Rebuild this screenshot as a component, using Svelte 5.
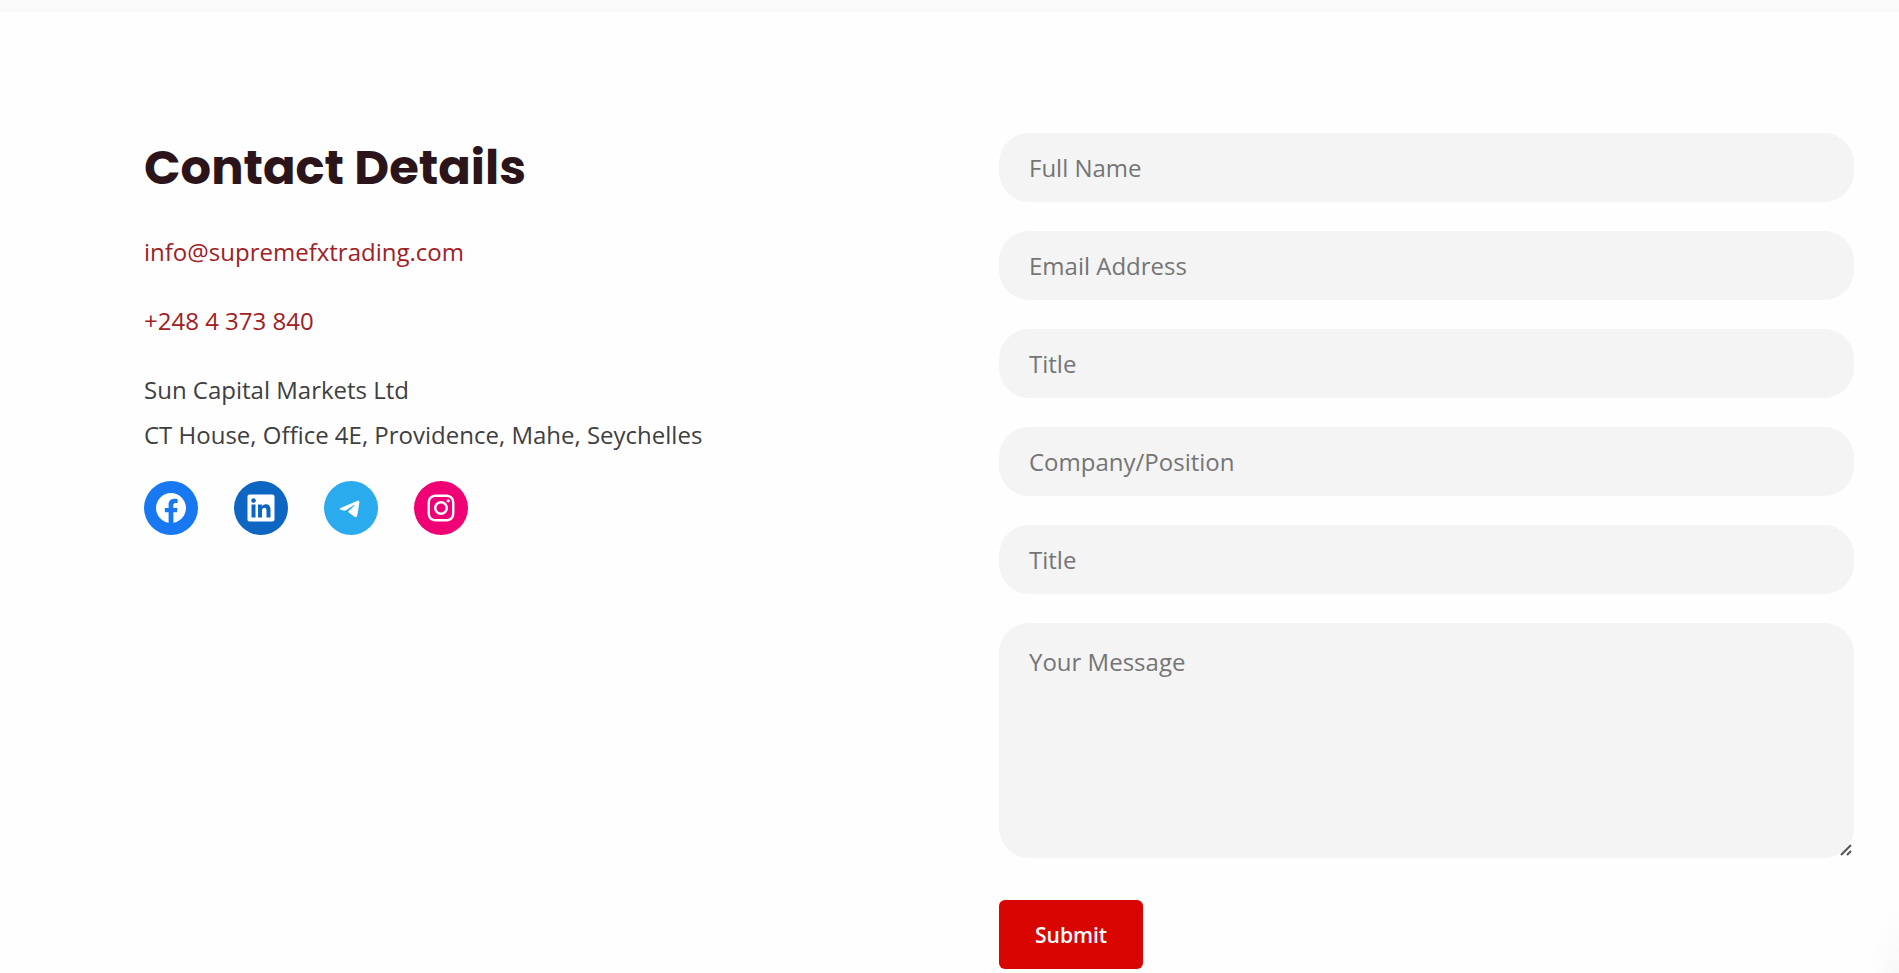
<script>
  const fields = [
    { name: 'full-name', label: 'Full Name', type: 'text' },
    { name: 'email', label: 'Email Address', type: 'email' },
    { name: 'title', label: 'Title', type: 'text' },
    { name: 'company', label: 'Company/Position', type: 'text' },
    { name: 'subject', label: 'Title', type: 'text' }
  ];

  const socials = [
    {
      name: 'Facebook',
      key: 'facebook',
      box: '0 0 24 24',
      path: 'M12 2C6.5 2 2 6.5 2 12c0 5 3.7 9.1 8.4 9.9v-7H7.9V12h2.5V9.8c0-2.5 1.5-3.9 3.8-3.9 1.1 0 2.2.2 2.2.2v2.5h-1.3c-1.2 0-1.6.8-1.6 1.6V12h2.8l-.4 2.9h-2.3v7C18.3 21.1 22 17 22 12c0-5.5-4.5-10-10-10z'
    },
    {
      name: 'LinkedIn',
      key: 'linkedin',
      box: '0 0 24 24',
      path: 'M19.7,3H4.3C3.582,3,3,3.582,3,4.3v15.4C3,20.418,3.582,21,4.3,21h15.4c0.718,0,1.3-0.582,1.3-1.3V4.3C21,3.582,20.418,3,19.7,3z M8.339,18.338H5.667v-8.59h2.672V18.338z M7.004,8.574c-0.857,0-1.549-0.694-1.549-1.548c0-0.855,0.691-1.548,1.549-1.548c0.854,0,1.547,0.694,1.547,1.548C8.551,7.881,7.858,8.574,7.004,8.574z M18.339,18.338h-2.669v-4.177c0-0.996-0.017-2.278-1.387-2.278c-1.389,0-1.601,1.086-1.601,2.206v4.249h-2.667v-8.59h2.559v1.174h0.037c0.356-0.675,1.227-1.387,2.526-1.387c2.703,0,3.203,1.779,3.203,4.092V18.338z'
    },
    {
      name: 'Telegram',
      key: 'telegram',
      box: '0 0 128 128',
      path: 'M28.97,63.324 C47.627,55.196 60.068,49.837 66.293,47.248 C84.067,39.855 87.76,38.571 90.167,38.528 C90.697,38.519 91.88,38.65 92.647,39.273 C93.295,39.798 93.473,40.508 93.558,41.006 C93.643,41.504 93.749,42.639 93.665,43.525 C92.702,53.645 88.534,78.203 86.414,89.538 C85.517,94.334 83.751,95.942 82.04,96.099 C78.324,96.441 75.502,93.643 71.902,91.284 C66.269,87.591 63.087,85.293 57.619,81.69 C51.3,77.526 55.397,75.237 58.998,71.497 C59.94,70.518 76.316,55.623 76.632,54.272 C76.672,54.103 76.709,53.473 76.335,53.141 C75.96,52.808 75.408,52.922 75.01,53.012 C74.445,53.14 65.446,59.088 48.014,70.855 C45.46,72.609 43.146,73.464 41.073,73.419 C38.788,73.37 34.393,72.127 31.125,71.065 C27.117,69.762 23.931,69.073 24.209,66.86 C24.353,65.708 25.94,64.529 28.97,63.324 Z'
    },
    {
      name: 'Instagram',
      key: 'instagram',
      box: '0 0 24 24',
      path: 'M12,4.622c2.403,0,2.688,0.009,3.637,0.052c0.877,0.04,1.354,0.187,1.671,0.31c0.42,0.163,0.72,0.358,1.035,0.673c0.315,0.315,0.51,0.615,0.673,1.035c0.123,0.317,0.27,0.794,0.31,1.671c0.043,0.949,0.052,1.234,0.052,3.637s-0.009,2.688-0.052,3.637c-0.04,0.877-0.187,1.354-0.31,1.671c-0.163,0.42-0.358,0.72-0.673,1.035c-0.315,0.315-0.615,0.51-1.035,0.673c-0.317,0.123-0.794,0.27-1.671,0.31c-0.949,0.043-1.233,0.052-3.637,0.052s-2.688-0.009-3.637-0.052c-0.877-0.04-1.354-0.187-1.671-0.31c-0.42-0.163-0.72-0.358-1.035-0.673c-0.315-0.315-0.51-0.615-0.673-1.035c-0.123-0.317-0.27-0.794-0.31-1.671C4.631,14.688,4.622,14.403,4.622,12s0.009-2.688,0.052-3.637c0.04-0.877,0.187-1.354,0.31-1.671c0.163-0.42,0.358-0.72,0.673-1.035c0.315-0.315,0.615-0.51,1.035-0.673c0.317-0.123,0.794-0.27,1.671-0.31C9.312,4.631,9.597,4.622,12,4.622 M12,3C9.556,3,9.249,3.01,8.289,3.054C7.331,3.098,6.677,3.25,6.105,3.472C5.513,3.702,5.011,4.01,4.511,4.511c-0.5,0.5-0.808,1.002-1.038,1.594C3.25,6.677,3.098,7.331,3.054,8.289C3.01,9.249,3,9.556,3,12c0,2.444,0.01,2.751,0.054,3.711c0.044,0.958,0.196,1.612,0.418,2.185c0.23,0.592,0.538,1.094,1.038,1.594c0.5,0.5,1.002,0.808,1.594,1.038c0.572,0.222,1.227,0.375,2.185,0.418C9.249,20.99,9.556,21,12,21s2.751-0.01,3.711-0.054c0.958-0.044,1.612-0.196,2.185-0.418c0.592-0.23,1.094-0.538,1.594-1.038c0.5-0.5,0.808-1.002,1.038-1.594c0.222-0.572,0.375-1.227,0.418-2.185C20.99,14.751,21,14.444,21,12s-0.01-2.751-0.054-3.711c-0.044-0.958-0.196-1.612-0.418-2.185c-0.23-0.592-0.538-1.094-1.038-1.594c-0.5-0.5-1.002-0.808-1.594-1.038c-0.572-0.222-1.227-0.375-2.185-0.418C14.751,3.01,14.444,3,12,3L12,3z M12,7.378c-2.552,0-4.622,2.069-4.622,4.622S9.448,16.622,12,16.622s4.622-2.069,4.622-4.622S14.552,7.378,12,7.378z M12,15c-1.657,0-3-1.343-3-3s1.343-3,3-3s3,1.343,3,3S13.657,15,12,15z M16.804,6.116c-0.596,0-1.08,0.484-1.08,1.08s0.484,1.08,1.08,1.08c0.596,0,1.08-0.484,1.08-1.08S17.4,6.116,16.804,6.116z'
    }
  ];
</script>

<div class="band"></div>
<main class="contact">
  <section class="details">
    <h2>Contact Details</h2>
    <p><a href="mailto:info@supremefxtrading.com">info@supremefxtrading.com</a></p>
    <p><a href="tel:+2484373840">+248 4 373 840</a></p>
    <p>Sun Capital Markets Ltd<br />CT House, Office 4E, Providence, Mahe, Seychelles</p>
    <ul class="socials">
      {#each socials as social}
        <li>
          <a class={social.key} href={`#${social.key}`} aria-label={social.name}>
            <svg viewBox={social.box} aria-hidden="true"><path d={social.path} /></svg>
          </a>
        </li>
      {/each}
    </ul>
  </section>

  <form onsubmit={(event) => event.preventDefault()}>
    {#each fields as field}
      <input type={field.type} name={field.name} placeholder={field.label} aria-label={field.label} />
    {/each}
    <div class="message">
      <textarea name="message" placeholder="Your Message" aria-label="Your Message"></textarea>
      <svg class="grip" viewBox="0 0 12 12" aria-hidden="true"><path d="M1 11 11 1M7 11l4-4" /></svg>
    </div>
    <button type="submit">Submit</button>
  </form>
</main>
<div class="corner-shade"></div>

<style>
  :global(body) {
    background: #fefefe;
    color: #3f3f3f;
    font: 24px/45px 'Open Sans', 'Noto Sans', sans-serif;
  }

  .band {
    height: 12px;
    background: #fafafa;
  }

  .contact {
    display: grid;
    grid-template-columns: 1fr 1fr;
    padding: 121px 45px 0 144px;
  }

  h2 {
    margin: 0 0 26px;
    color: #2b151a;
    font: 700 48px/70px Poppins, Inter, sans-serif;
  }

  p {
    margin: 0 0 24px;
  }

  p a {
    color: #a02024;
    text-decoration: none;
  }

  .socials {
    display: flex;
    gap: 36px;
    margin: 0;
    padding: 0;
    list-style: none;
  }

  .socials a {
    display: flex;
    align-items: center;
    justify-content: center;
    width: 54px;
    height: 54px;
    border-radius: 50%;
    color: #fff;
  }

  .socials svg {
    width: 36px;
    height: 36px;
    fill: currentColor;
  }

  .facebook {
    background: #1778f2;
  }

  .linkedin {
    background: #0d66c2;
  }

  .telegram {
    background: #2aabee;
  }

  .instagram {
    background: #f00075;
  }

  form {
    display: flex;
    flex-direction: column;
    align-items: flex-start;
    gap: 29px;
  }

  input,
  textarea {
    box-sizing: border-box;
    width: 100%;
    border: 0;
    border-radius: 30px;
    background: #f4f4f4;
    color: #3f3f3f;
    font: inherit;
  }

  input {
    height: 69px;
    padding: 0 30px;
  }

  .message {
    position: relative;
    width: 100%;
  }

  textarea {
    display: block;
    height: 235px;
    padding: 16px 30px;
    resize: vertical;
  }

  textarea::-webkit-resizer {
    background: transparent;
  }

  .grip {
    position: absolute;
    right: 2px;
    bottom: 2px;
    width: 12px;
    height: 12px;
    fill: none;
    stroke: #555;
    stroke-width: 2;
    pointer-events: none;
  }

  input::placeholder,
  textarea::placeholder {
    color: #757575;
    opacity: 1;
  }

  button {
    height: 69px;
    margin-top: 13px;
    padding: 0 36px;
    border: 0;
    border-radius: 6px;
    background: #d90500;
    color: #fff;
    font: 600 21px/30px 'Open Sans', 'Noto Sans', sans-serif;
  }

  .corner-shade {
    position: fixed;
    right: 0;
    bottom: 0;
    width: 30px;
    height: 66px;
    background: radial-gradient(farthest-side at 100% 100%, #f8f8f8, #fefefe);
  }
</style>
